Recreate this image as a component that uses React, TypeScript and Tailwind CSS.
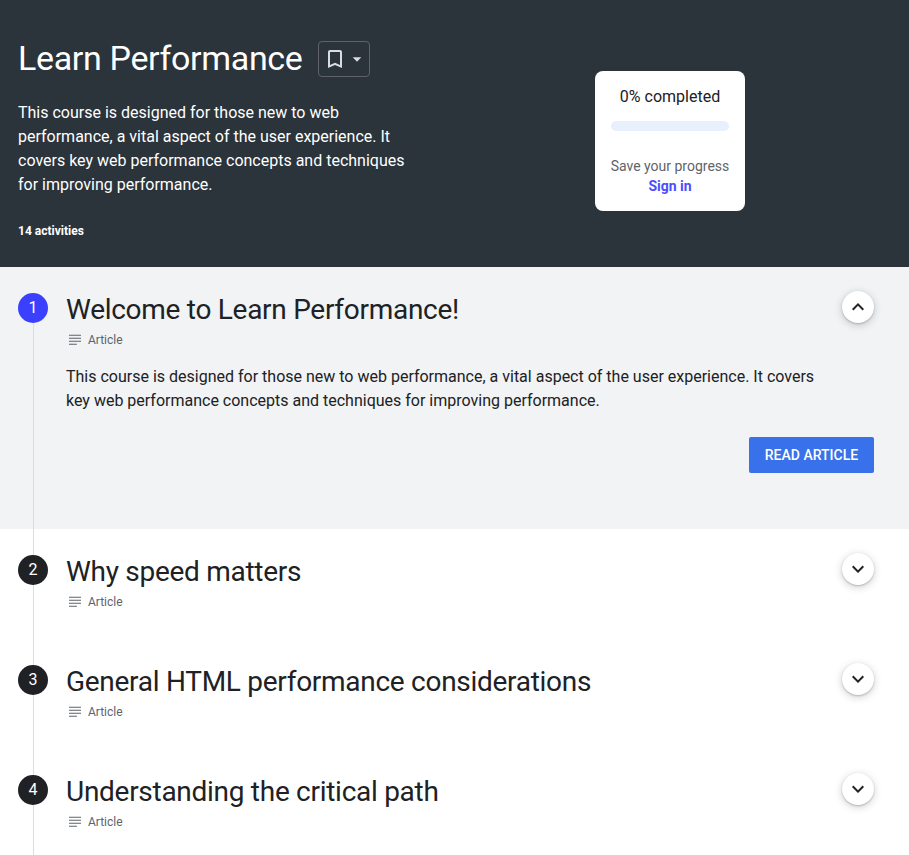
import React from "react";

function Chevron({ up }: { up?: boolean }) {
  return (
    <svg width="24" height="24" viewBox="0 0 24 24" fill="#202124">
      {up ? (
        <path d="M7.41 15.41 12 10.83l4.59 4.58L18 14l-6-6-6 6z" />
      ) : (
        <path d="M7.41 8.59 12 13.17l4.59-4.58L18 10l-6 6-6-6z" />
      )}
    </svg>
  );
}

function Subject() {
  return (
    <svg width="18" height="18" viewBox="0 0 24 24" fill="#5f6368" className="shrink-0">
      <path d="M4 5h16v1.300H4zM4 9h16v1.300H4zM4 13h16v1.300H4zM4 17h10.500v1.300H4z" />
    </svg>
  );
}

function Item({
  n,
  title,
  open,
}: {
  n: number;
  title: string;
  open?: boolean;
}) {
  return (
    <section className={open ? "flex bg-[#f1f3f4] h-[262px] shrink-0" : "flex bg-white h-[110px] shrink-0"}>
      <div className="flex flex-col items-center w-[30px] ml-[18px] shrink-0">
        <div className={open ? "w-px h-[26px] bg-transparent" : "w-px h-[26px] bg-[#dadce0]"} />
        <div
          className={
            open
              ? "w-[30px] h-[30px] rounded-full bg-[#3b40ff] text-white flex items-center justify-center text-base shrink-0"
              : "w-[30px] h-[30px] rounded-full bg-[#202124] text-white flex items-center justify-center text-base shrink-0"
          }
        >
          {n}
        </div>
        <div className="w-px flex-1 bg-[#dadce0]" />
      </div>
      <div className="flex-1 ml-[18px] mr-[35px] pt-[24px] min-w-0">
        <div className="flex justify-between items-start">
          <h2 className="text-[28px] leading-[36px] mt-[1px] font-normal tracking-[-0.28px] text-[#202124]">{title}</h2>
          <button className="w-[32px] h-[32px] rounded-full bg-white shadow-[0_1px_2px_rgba(60,64,67,0.3),0_2px_6px_2px_rgba(60,64,67,0.15)] flex items-center justify-center shrink-0">
            <Chevron up={open} />
          </button>
        </div>
        <div className="flex items-center gap-[4px] h-[20px] mt-[2px] text-xs text-[#5f6368]">
          <Subject />
          <span>Article</span>
        </div>
        {open && (
          <>
            <p className="mt-[15px] w-[760px] text-base leading-[24px] text-[#202124]">
              This course is designed for those new to web performance, a vital aspect of the user experience. It covers key web performance concepts and techniques for improving performance.
            </p>
            <div className="flex justify-end mt-[24px]">
              <button className="h-[36px] w-[125px] rounded-[2px] bg-[#3871e9] text-white text-sm font-medium uppercase">
                Read article
              </button>
            </div>
          </>
        )}
      </div>
    </section>
  );
}

export default function App() {
  return (
    <div className="h-[855px] overflow-hidden bg-white font-['Roboto',sans-serif] flex flex-col">
      <header className="h-[267px] shrink-0 bg-[#2b333b] text-white flex pl-[18px]">
        <div className="w-[392px] shrink-0 pt-[38px]">
          <div className="flex items-center gap-[16px] h-[42px]">
            <h1 className="text-[34px] leading-[40px] pb-[2px] font-normal tracking-[-0.34px]">Learn Performance</h1>
            <button className="w-[52px] h-[36px] rounded-[4px] border border-[#5f6368] flex items-center pl-[5px]">
              <svg width="22" height="24" viewBox="1 0 22 24" fill="#dadce0" className="shrink-0">
                <path d="M17 3H7c-1.100 0-2 .9-2 2v16l7-3 7 3V5c0-1.100-.9-2-2-2zm0 15-5-2.180L7 18V5h10v13z" />
              </svg>
              <svg width="24" height="24" viewBox="0 0 24 24" fill="#dadce0" className="shrink-0 ml-[-1px]">
                <path d="M7.700 10.200 12 14.700l4.300-4.500z" />
              </svg>
            </button>
          </div>
          <p className="mt-[21px] text-base leading-[24px]">
            This course is designed for those new to web performance, a vital aspect of the user experience. It covers key web performance concepts and techniques for improving performance.
          </p>
          <p className="mt-[24px] text-xs leading-[20px] font-bold">14 activities</p>
        </div>
        <div className="flex-1 flex items-start pt-[71px] pl-[185px]">
          <div className="w-[150px] h-[140px] bg-white rounded-[8px] flex flex-col items-center pt-[16px]">
            <div className="text-base leading-[20px] text-[#202124]">0% completed</div>
            <div className="w-[118px] h-[10px] rounded-full bg-[#e8f0fe] mt-[14px]" />
            <div className="mt-[25px] text-sm leading-[20px] text-[#5f6368]">Save your progress</div>
            <a className="text-sm leading-[20px] font-bold text-[#4a4dff]">Sign in</a>
          </div>
        </div>
      </header>
      <Item n={1} title="Welcome to Learn Performance!" open />
      <Item n={2} title="Why speed matters" />
      <Item n={3} title="General HTML performance considerations" />
      <Item n={4} title="Understanding the critical path" />
    </div>
  );
}
